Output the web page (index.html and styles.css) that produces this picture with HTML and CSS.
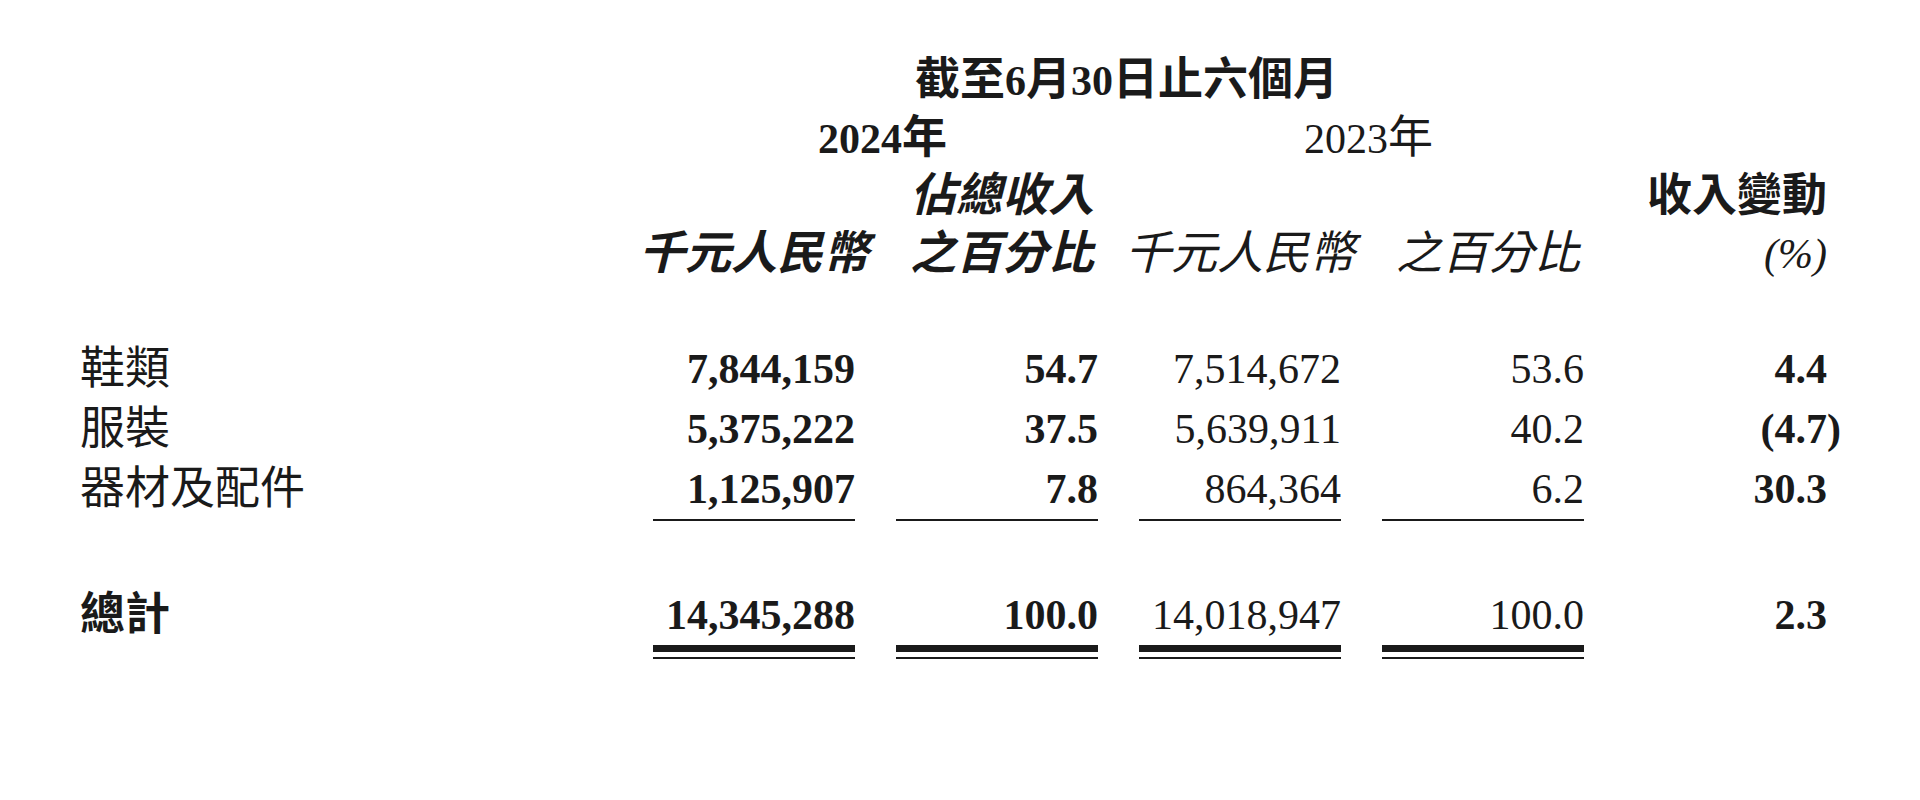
FILE: index.html
```html
<!DOCTYPE html>
<html lang="zh-Hant">
<head>
<meta charset="utf-8">
<title>收入分析</title>
<link rel="stylesheet" href="styles.css">
</head>
<body>
<div class="sheet">
  <div class="h title b zh">截至<span class="lat">6</span>月<span class="lat">30</span>日止六個月</div>

  <div class="h year y24 b">2024<span class="zh">年</span></div>
  <div class="h year y23">2023<span class="zh">年</span></div>

  <div class="h num c3 b i zh pc">佔總收入</div>
  <div class="h num c6 b zh">收入變動</div>

  <div class="h num c2 b i zh wide">千元人民幣</div>
  <div class="h num c3 b i zh pc">之百分比</div>
  <div class="h num c4 i zh wide">千元人民幣</div>
  <div class="h num c5 i zh pc">之百分比</div>
  <div class="h num c6 i">(%)</div>

  <div class="spacer s1"></div>

  <div class="r lab zh">鞋類</div>
  <div class="r num b">7,844,159</div>
  <div class="r num b">54.7</div>
  <div class="r num">7,514,672</div>
  <div class="r num">53.6</div>
  <div class="r num b">4.4</div>

  <div class="r lab zh">服裝</div>
  <div class="r num b">5,375,222</div>
  <div class="r num b">37.5</div>
  <div class="r num">5,639,911</div>
  <div class="r num">40.2</div>
  <div class="r num b">(4.7<span class="rp">)</span></div>

  <div class="r lab zh">器材及配件</div>
  <div class="r num b u">1,125,907</div>
  <div class="r num b u">7.8</div>
  <div class="r num u">864,364</div>
  <div class="r num u">6.2</div>
  <div class="r num b">30.3</div>

  <div class="spacer s2"></div>

  <div class="r lab zh b">總計</div>
  <div class="tot"><div class="tv num b">14,345,288</div></div>
  <div class="tot"><div class="tv num b">100.0</div></div>
  <div class="tot"><div class="tv num">14,018,947</div></div>
  <div class="tot"><div class="tv num">100.0</div></div>
  <div class="r num b">2.3</div>
</div>
</body>
</html>
```

FILE: styles.css
```css
html, body {
  margin: 0;
  background: #ffffff;
}

body {
  font-family: "Liberation Serif", "Noto Sans CJK TC", serif;
  color: #1a1a1a;
}

.sheet {
  display: grid;
  grid-template-columns: 532px repeat(5, 202px);
  column-gap: 41px;
  padding: 51px 0 0 80px;
  font-size: 42px;
}

.zh {
  font-family: "Liberation Serif", "Noto Sans CJK TC", serif;
  font-size: 45px;
}

.lat {
  font-size: 42px;
}

.b { font-weight: 700; }
.i { font-style: italic; }

.h {
  height: 58px;
  line-height: 58px;
  white-space: nowrap;
}

.title {
  grid-column: 2 / 6;
  text-align: center;
  padding-left: 16px;
}

.year {
  text-align: center;
  padding-left: 14px;
}

.y24 { grid-column: 2 / 4; }
.y23 { grid-column: 4 / 6; font-weight: 400; }

.c2 { grid-column: 2; }
.c3 { grid-column: 3; }
.c4 { grid-column: 4; }
.c5 { grid-column: 5; }
.c6 { grid-column: 6; }

.num {
  text-align: right;
  white-space: nowrap;
}

.wide {
  margin-left: -40px;
  margin-right: -14px;
  font-size: 46px;
}

.pc {
  font-size: 46px;
  margin-right: 4px;
}

.spacer {
  grid-column: 1 / -1;
}

.s1 { height: 56px; }
.s2 { height: 64px; }

.r {
  height: 60px;
  line-height: 60px;
}

.lab {
  text-align: left;
}

.rp {
  margin-right: -14px;
}

.u {
  border-bottom: 2px solid #1a1a1a;
}

.tot {
  border-bottom: 2px solid #1a1a1a;
  padding-bottom: 5px;
}

.tv {
  height: 60px;
  line-height: 60px;
  border-bottom: 7px solid #1a1a1a;
}
```
